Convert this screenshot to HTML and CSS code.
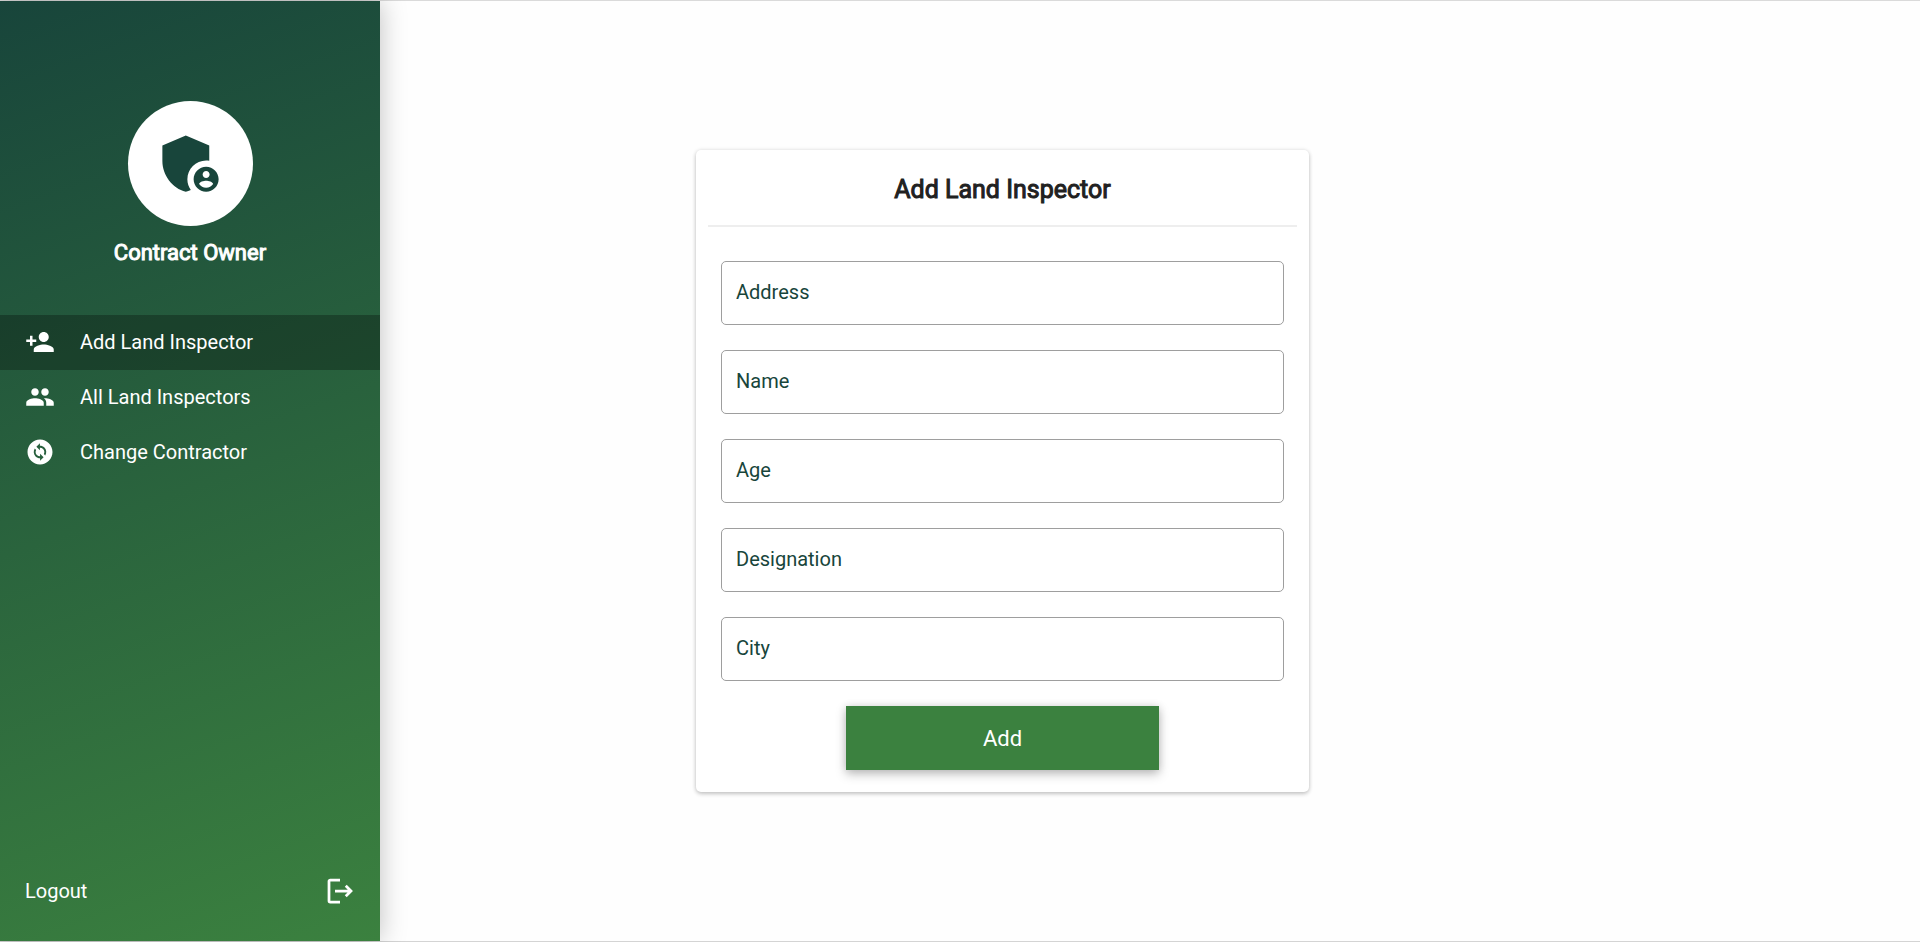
FILE: index.html
```html
<!DOCTYPE html>
<html lang="en">
<head>
<meta charset="utf-8">
<meta name="viewport" content="width=device-width, initial-scale=1">
<title>Add Land Inspector</title>
<link rel="stylesheet" href="styles.css">
</head>
<body>
<div class="app">
  <aside class="sidebar">
    <div class="profile">
      <div class="avatar">
        <svg class="avatar-icon" viewBox="0 0 24 24" aria-hidden="true"><path d="M17 11c.34 0 .67.04 1 .09V6.27L10.500 3 3 6.27v4.910c0 4.540 3.200 8.790 7.500 9.820.55-.13 1.080-.32 1.600-.55C11.410 19.470 11 18.280 11 17c0-3.310 2.690-6 6-6z"/><path d="M17 13c-2.210 0-4 1.790-4 4s1.790 4 4 4 4-1.790 4-4-1.790-4-4-4zm0 1.380c.62 0 1.120.51 1.120 1.120s-.51 1.120-1.120 1.120-1.120-.51-1.120-1.120.5-1.120 1.120-1.120zm0 5.370c-.93 0-1.740-.46-2.240-1.170.05-.72 1.510-1.080 2.240-1.080s2.190.36 2.240 1.080c-.5.710-1.310 1.170-2.240 1.170z"/></svg>
      </div>
      <p class="role">Contract Owner</p>
    </div>
    <nav class="menu" aria-label="Main">
      <a class="item active" href="#add" aria-current="page">
        <svg class="icon" viewBox="0 0 24 24" aria-hidden="true"><path d="M15 12c2.210 0 4-1.790 4-4s-1.790-4-4-4-4 1.790-4 4 1.790 4 4 4zm-9-2V7H4v3H1v2h3v3h2v-3h3v-2H6zm9 4c-2.670 0-8 1.340-8 4v2h16v-2c0-2.660-5.330-4-8-4z"/></svg>
        <span>Add Land Inspector</span>
      </a>
      <a class="item" href="#all">
        <svg class="icon" viewBox="0 0 24 24" aria-hidden="true"><path d="M16 11c1.660 0 2.990-1.340 2.990-3S17.660 5 16 5s-3 1.340-3 3 1.340 3 3 3zm-8 0c1.660 0 2.990-1.340 2.990-3S9.660 5 8 5 5 6.340 5 8s1.340 3 3 3zm0 2c-2.330 0-7 1.170-7 3.500V19h14v-2.500c0-2.330-4.670-3.500-7-3.500zm8 0c-.29 0-.62.02-.97.05 1.160.84 1.970 1.970 1.970 3.450V19h6v-2.500c0-2.330-4.670-3.500-7-3.500z"/></svg>
        <span>All Land Inspectors</span>
      </a>
      <a class="item" href="#change">
        <svg class="icon" viewBox="0 0 24 24" aria-hidden="true"><path d="M12 2C6.480 2 2 6.480 2 12s4.480 10 10 10 10-4.480 10-10S17.520 2 12 2zM12.060 19v-2.010H12c-1.280 0-2.560-.49-3.540-1.460-1.710-1.710-1.920-4.350-.64-6.290l1.100 1.100c-.71 1.330-.53 3.010.59 4.130.7.7 1.620 1.030 2.540 1.010v-2.140l2.830 2.830L12.060 19zM16.170 14.760l-1.100-1.100c.71-1.330.53-3.010-.59-4.130C13.790 8.840 12.900 8.500 12 8.500h-.06v2.150L9.110 7.830 11.940 5v2.020c1.300-.02 2.610.45 3.600 1.450 1.700 1.700 1.910 4.350.63 6.290z"/></svg>
        <span>Change Contractor</span>
      </a>
    </nav>
    <button class="logout" type="button">
      <span>Logout</span>
      <svg class="icon icon-line" viewBox="0 0 24 24" aria-hidden="true"><path d="M12 3.200H4.200a1 1 0 0 0-1 1v15.600a1 1 0 0 0 1 1H12M8 12h13M16.600 7.800l4.200 4.200-4.200 4.200"/></svg>
    </button>
  </aside>
  <main class="content">
    <form class="card">
      <h1 class="title">Add Land Inspector</h1>
      <div class="fields">
        <input class="field" type="text" placeholder="Address" aria-label="Address">
        <input class="field" type="text" placeholder="Name" aria-label="Name">
        <input class="field" type="text" placeholder="Age" aria-label="Age">
        <input class="field" type="text" placeholder="Designation" aria-label="Designation">
        <input class="field" type="text" placeholder="City" aria-label="City">
        <button class="submit" type="submit">Add</button>
      </div>
    </form>
  </main>
</div>
</body>
</html>
```
FILE: styles.css
```css
* { box-sizing: border-box; }
body {
  margin: 0;
  font-family: Roboto, sans-serif;
  font-size: 20px;
  background: #fefefe;
}
.app {
  display: flex;
  min-height: 100vh;
  border-top: 1px solid #dadada;
  border-bottom: 1px solid #d4d4d4;
}
.sidebar {
  display: flex;
  flex-direction: column;
  flex: 0 0 380px;
  padding: 100px 0 25px;
  color: #fff;
  background: linear-gradient(160deg, #18453b, #3b813f);
  box-shadow: 0 0 25px rgba(0, 0, 0, 0.25);
}
.profile {
  display: flex;
  flex-direction: column;
  align-items: center;
  margin-bottom: 48px;
}
.avatar {
  display: grid;
  place-items: center;
  width: 125px;
  height: 125px;
  border-radius: 50%;
  background: #fff;
}
.avatar-icon { width: 75px; height: 75px; fill: #18453b; }
.role {
  margin: 13px 0 0;
  font-size: 22px;
  line-height: 28px;
  -webkit-text-stroke: 1px currentColor;
}
.menu { display: flex; flex-direction: column; }
.item {
  display: flex;
  align-items: center;
  gap: 25px;
  height: 55px;
  padding: 0 25px 2px;
  color: inherit;
  text-decoration: none;
}
.item.active { background: rgba(0, 0, 0, 0.28); }
.icon { width: 30px; height: 30px; fill: currentColor; }
.icon-line { fill: none; stroke: currentColor; stroke-width: 2.200; }
.logout {
  display: flex;
  align-items: center;
  justify-content: space-between;
  margin-top: auto;
  height: 50px;
  padding: 0 25px;
  border: 0;
  background: none;
  color: inherit;
  font: inherit;
}
.content {
  flex: 1;
  display: flex;
  align-items: center;
  justify-content: center;
  padding-right: 295px;
}
.card {
  flex: 0 1 613px;
  padding: 12px 12px 10px;
  border-radius: 5px;
  background: #fff;
  box-shadow: 0 2px 4px rgba(0, 0, 0, 0.2), 0 0 4px rgba(0, 0, 0, 0.1);
}
.title {
  margin: 0;
  padding: 13px 0 20px;
  border-bottom: 2px solid #eee;
  text-align: center;
  font-size: 25px;
  font-weight: 400;
  line-height: 30px;
  color: #212121;
  -webkit-text-stroke: 1px currentColor;
}
.fields {
  display: flex;
  flex-direction: column;
  gap: 25px;
  padding: 34px 13px 12px;
}
.field {
  width: 100%;
  height: 64px;
  padding: 0 14px 2px;
  border: 1px solid #9e9e9e;
  border-radius: 5px;
  background: #fff;
  color: #18453b;
  font: inherit;
}
.field::placeholder { color: #18453b; opacity: 1; }
.submit {
  align-self: center;
  width: 313px;
  height: 64px;
  border: 0;
  background: #3b813f;
  color: #fff;
  font: inherit;
  font-size: 22px;
  box-shadow: 0 4px 10px rgba(0, 0, 0, 0.25), 0 0 8px rgba(0, 0, 0, 0.1);
}
```
